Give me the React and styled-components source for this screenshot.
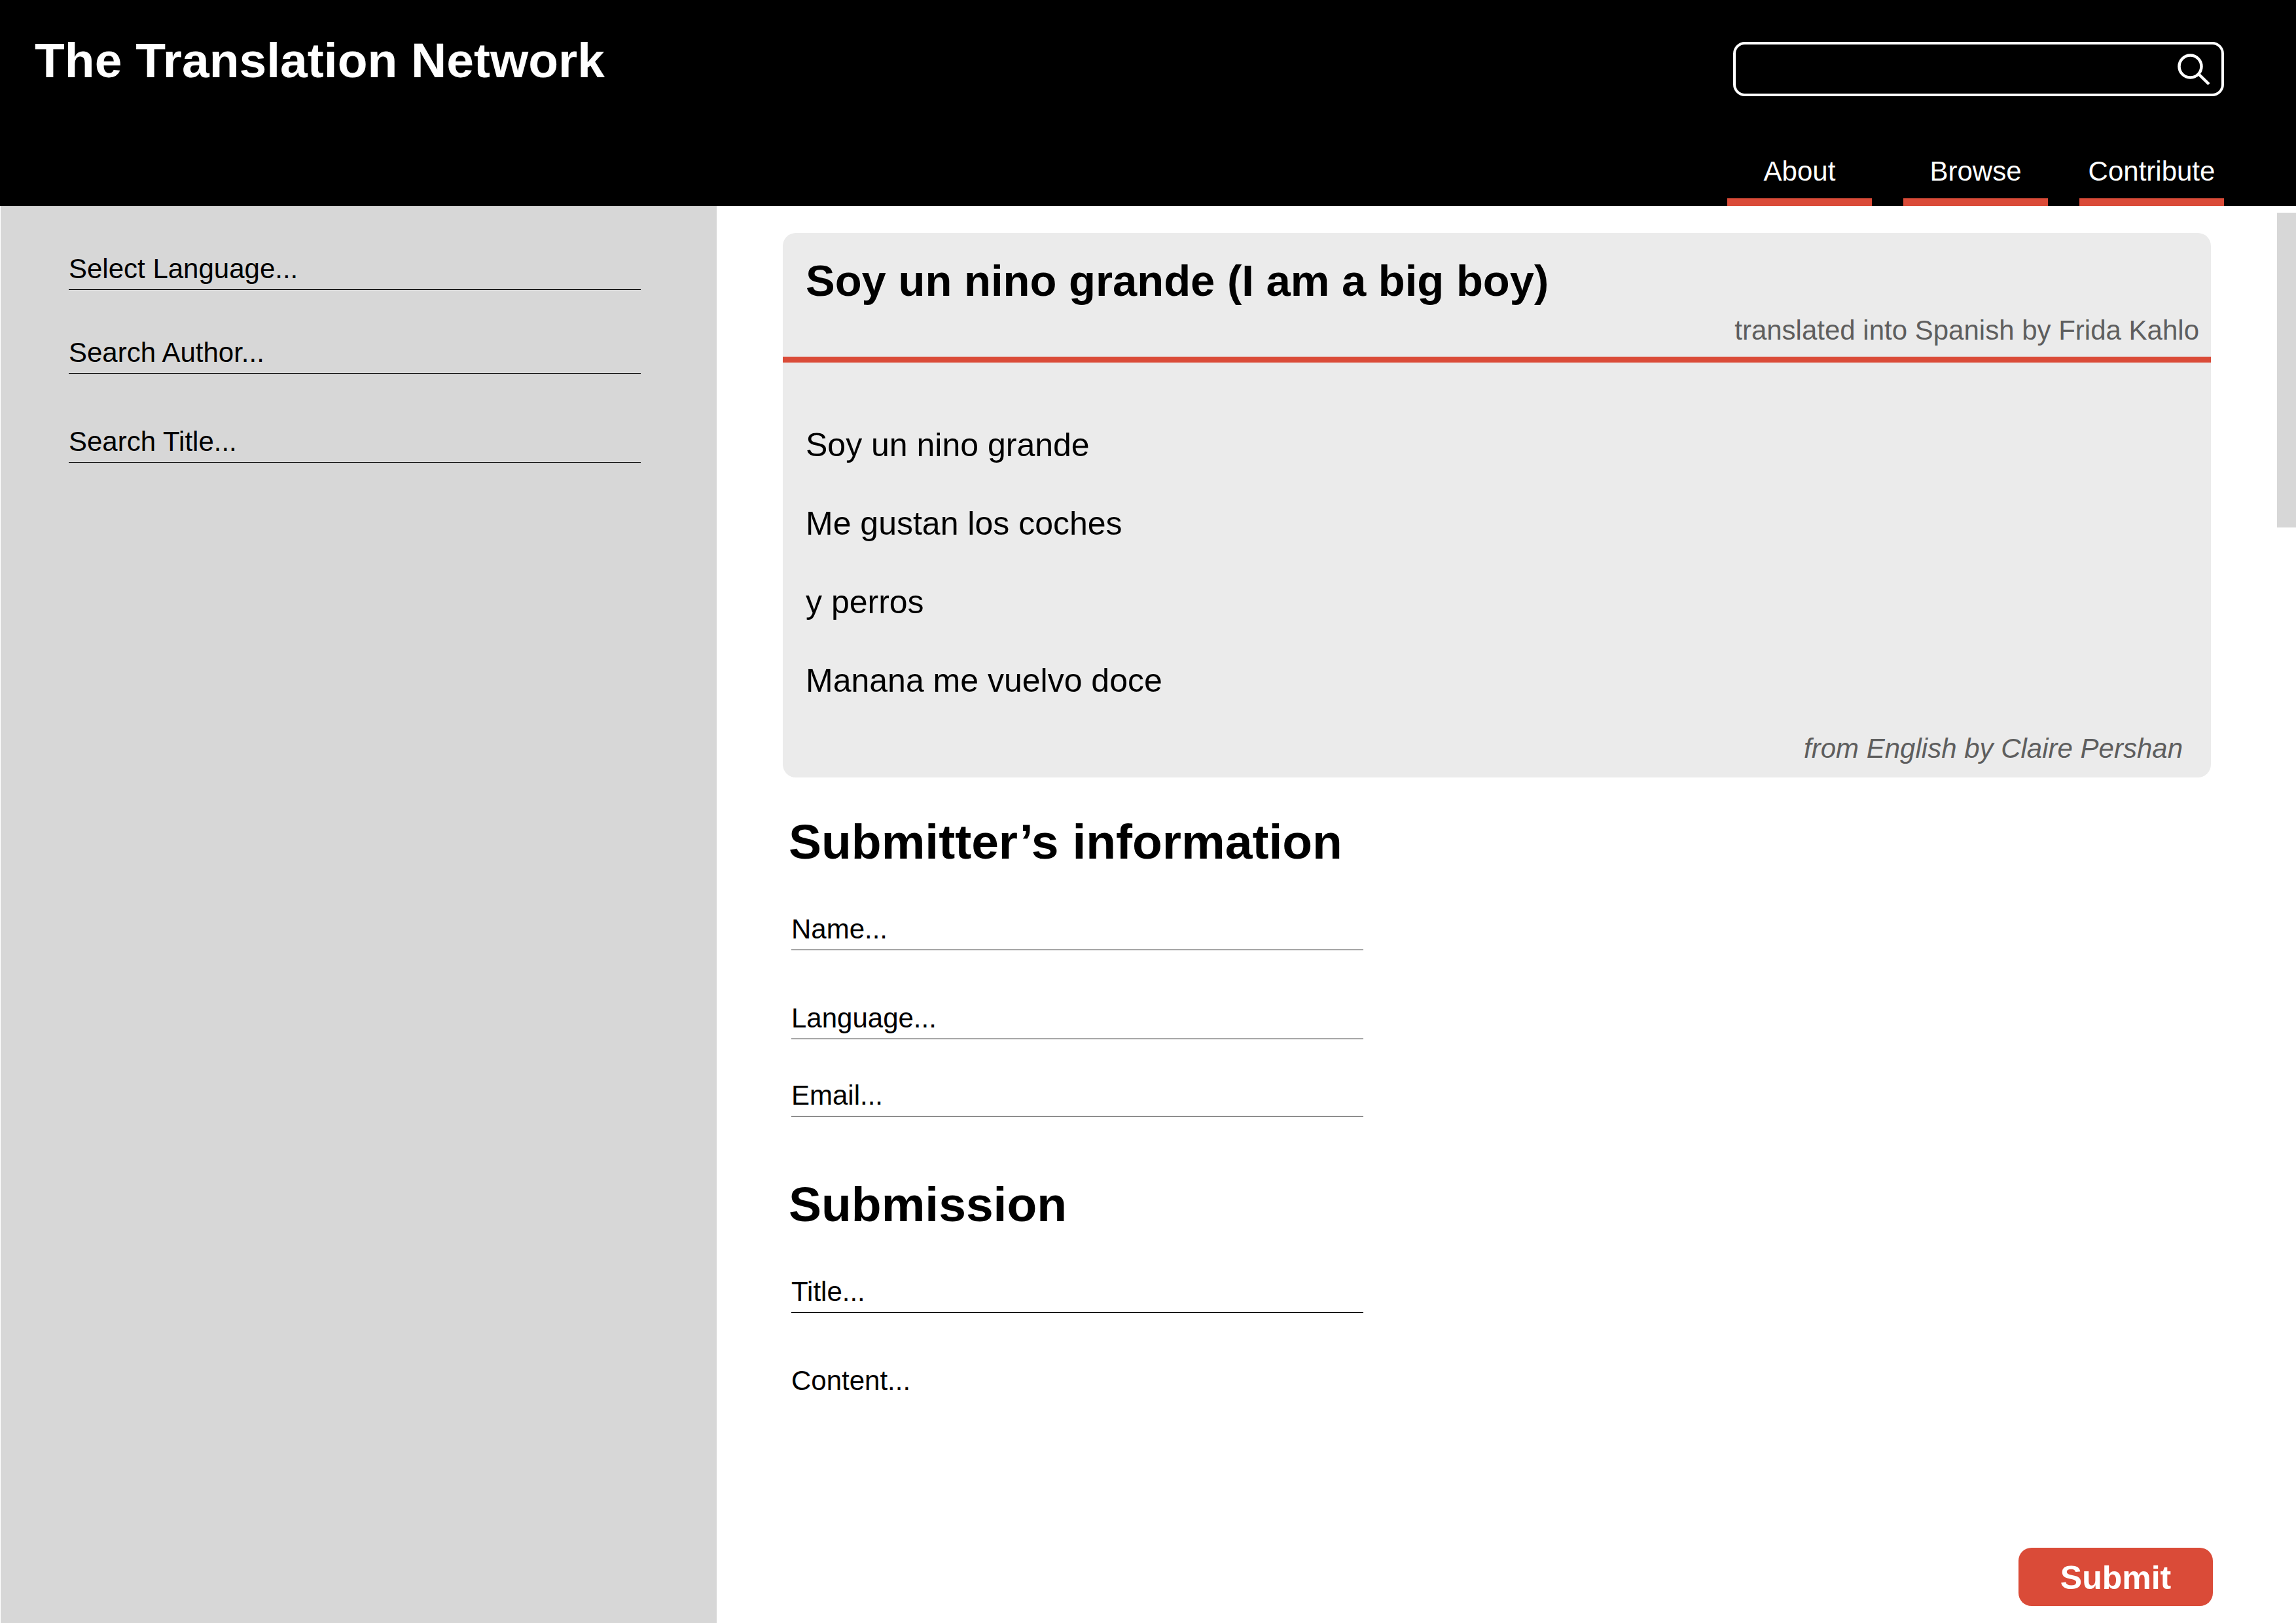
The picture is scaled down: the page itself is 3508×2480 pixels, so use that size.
import React from "react";
import styled, { createGlobalStyle } from "styled-components";

const color = {
  ink: "#000000",
  paper: "#ffffff",
  accent: "#da4b38",
  side: "#d7d7d7",
  card: "#ebebeb",
  muted: "#5e5e5e",
};

const GlobalStyle = createGlobalStyle`
  *, *::before, *::after { box-sizing: border-box; }
  body {
    margin: 0;
    background: ${color.paper};
    color: ${color.ink};
    font-family: "Liberation Sans", Arial, Helvetica, sans-serif;
    font-size: 42px;
    line-height: 50px;
  }
  h1, h2, p { margin: 0; }
  input, select, textarea, button { font: inherit; color: inherit; }
`;

const Page = styled.div`
  display: flex;
  flex-direction: column;
  min-height: 100vh;
`;

const Header = styled.header`
  display: flex;
  justify-content: space-between;
  padding: 0 110px 0 53px;
  background: ${color.ink};
  color: ${color.paper};
`;

const SiteTitle = styled.h1`
  padding-top: 50px;
  font-size: 75px;
  line-height: 84px;
`;

const HeaderTools = styled.div`
  display: flex;
  flex-direction: column;
  align-items: flex-end;
  gap: 90px;
  padding-top: 64px;
`;

const SearchBox = styled.form`
  display: flex;
  align-items: center;
  width: 750px;
  height: 83px;
  padding: 0 17px 0 20px;
  border: 4px solid ${color.paper};
  border-radius: 18px;
`;

const SearchInput = styled.input`
  flex: 1;
  min-width: 0;
  padding: 0;
  border: 0;
  outline: 0;
  background: transparent;
`;

const IconButton = styled.button`
  display: flex;
  padding: 0;
  border: 0;
  background: transparent;
  cursor: pointer;
`;

const Nav = styled.nav`
  display: flex;
  gap: 48px;
`;

const NavLink = styled.a`
  width: 221px;
  padding-bottom: 16px;
  border-bottom: 12px solid ${color.accent};
  color: inherit;
  text-align: center;
  text-decoration: none;
`;

const Body = styled.div`
  flex: 1;
  display: grid;
  grid-template-columns: minmax(0, 1095fr) minmax(0, 2413fr);
`;

const Sidebar = styled.aside`
  padding: 71px 104px;
  border-left: 1px solid ${color.paper};
  background: ${color.side};
`;

const Content = styled.div`
  display: flex;
`;

const Main = styled.main`
  flex: 1;
  min-width: 0;
  display: flex;
  flex-direction: column;
  padding: 41px 98px 26px 101px;
`;

const ScrollRail = styled.div`
  width: 29px;
  padding-top: 10px;
`;

const ScrollThumb = styled.div`
  height: 481px;
  background: ${color.side};
`;

const Card = styled.article`
  margin-right: 3px;
  border-radius: 20px;
  background: ${color.card};
`;

const CardHeader = styled.header`
  display: flex;
  flex-direction: column;
  gap: 13px;
  padding: 35px 18px 15px 35px;
  border-bottom: 9px solid ${color.accent};
`;

const CardTitle = styled.h2`
  font-size: 67px;
  line-height: 76px;
`;

const Credit = styled.p`
  color: ${color.muted};
  text-align: right;
  font-style: ${(p) => (p.$italic ? "italic" : "normal")};
`;

const CardBody = styled.div`
  display: flex;
  flex-direction: column;
  gap: 19px;
  padding: 66px 43px 19px 35px;
`;

const Verse = styled.p`
  font-size: 50px;
  line-height: 120px;
`;

const SubmitForm = styled.form`
  flex: 1;
  display: flex;
  flex-direction: column;
`;

const SectionTitle = styled.h2`
  padding: 0 0 67px 9px;
  margin-top: ${(p) => p.$space}px;
  font-size: 75px;
  line-height: 84px;
`;

const FieldGroup = styled.div`
  display: flex;
  flex-direction: column;
  padding-left: ${(p) => (p.$inset ? 13 : 0)}px;
`;

const Field = styled.input`
  display: block;
  width: 874px;
  max-width: 100%;
  height: 57px;
  margin: ${(p) => p.$space || 0}px 0 0;
  padding: 0 0 6px;
  border: 0;
  border-bottom: 1px solid ${color.ink};
  border-radius: 0;
  outline: 0;
  appearance: none;
  background: transparent;
  line-height: 50px;

  &::placeholder {
    color: ${color.ink};
    opacity: 1;
  }
`;

const ContentField = styled(Field)`
  height: 192px;
  border-bottom: 0;
  resize: none;
`;

const SubmitButton = styled.button`
  align-self: flex-end;
  width: 297px;
  margin-top: auto;
  padding: 18px 0 15px;
  border: 0;
  border-radius: 20px;
  background: ${color.accent};
  color: ${color.paper};
  font-size: 50px;
  font-weight: bold;
  line-height: 56px;
  cursor: pointer;
`;

function SearchIcon() {
  return (
    <svg width="50" height="48" viewBox="0 0 50 48" fill="none" stroke="currentColor" strokeWidth="4.5" aria-hidden="true">
      <circle cx="19.5" cy="19.5" r="17" />
      <path d="M32.5 31.5 L48 46.5" />
    </svg>
  );
}

const navItems = ["About", "Browse", "Contribute"];

const verses = [
  "Soy un nino grande",
  "Me gustan los coches",
  "y perros",
  "Manana me vuelvo doce",
];

const stay = (event) => event.preventDefault();

export default function App() {
  return (
    <Page>
      <GlobalStyle />
      <Header>
        <SiteTitle>The Translation Network</SiteTitle>
        <HeaderTools>
          <SearchBox role="search" onSubmit={stay}>
            <SearchInput type="text" aria-label="Search" />
            <IconButton type="submit" aria-label="Search">
              <SearchIcon />
            </IconButton>
          </SearchBox>
          <Nav>
            {navItems.map((item) => (
              <NavLink key={item} href={`#${item.toLowerCase()}`}>{item}</NavLink>
            ))}
          </Nav>
        </HeaderTools>
      </Header>

      <Body>
        <Sidebar>
          <FieldGroup>
            <Field as="select" aria-label="Select Language" defaultValue="">
              <option value="">Select Language...</option>
              <option value="en">English</option>
              <option value="es">Spanish</option>
            </Field>
            <Field $space={71} type="text" aria-label="Search Author" placeholder="Search Author..." />
            <Field $space={79} type="text" aria-label="Search Title" placeholder="Search Title..." />
          </FieldGroup>
        </Sidebar>

        <Content>
          <Main>
            <Card>
              <CardHeader>
                <CardTitle>Soy un nino grande (I am a big boy)</CardTitle>
                <Credit>translated into Spanish by Frida Kahlo</Credit>
              </CardHeader>
              <CardBody>
                <div>
                  {verses.map((line) => (
                    <Verse key={line}>{line}</Verse>
                  ))}
                </div>
                <Credit $italic>from English by Claire Pershan</Credit>
              </CardBody>
            </Card>

            <SubmitForm onSubmit={stay}>
              <SectionTitle $space={56}>Submitter’s information</SectionTitle>
              <FieldGroup $inset>
                <Field type="text" aria-label="Name" placeholder="Name..." />
                <Field $space={79} type="text" aria-label="Language" placeholder="Language..." />
                <Field $space={61} type="email" aria-label="Email" placeholder="Email..." />
              </FieldGroup>

              <SectionTitle $space={92}>Submission</SectionTitle>
              <FieldGroup $inset>
                <Field type="text" aria-label="Title" placeholder="Title..." />
                <ContentField as="textarea" $space={79} aria-label="Content" placeholder="Content..." />
              </FieldGroup>

              <SubmitButton type="submit">Submit</SubmitButton>
            </SubmitForm>
          </Main>
          <ScrollRail>
            <ScrollThumb />
          </ScrollRail>
        </Content>
      </Body>
    </Page>
  );
}
